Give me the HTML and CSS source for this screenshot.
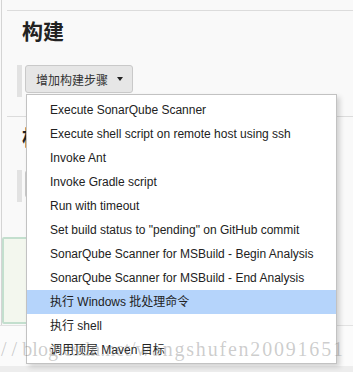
FILE: index.html
```html
<!DOCTYPE html>
<html lang="zh">
<head>
<meta charset="utf-8">
<title>构建</title>
<link rel="stylesheet" href="styles.css">
</head>
<body>
<div class="frame">
  <section class="section">
    <h2 class="title">构建</h2>
    <div class="step-row">
      <span class="bar"></span>
      <button class="add-btn">增加构建步骤<span class="caret"></span></button>
    </div>
  </section>
  <section class="section section-post">
    <h2 class="title">构建后操作</h2>
    <div class="step-row">
      <span class="bar"></span>
      <button class="add-btn">增加构建后操作步骤<span class="caret"></span></button>
    </div>
  </section>
  <div class="note-box"></div>
  <div class="footer-rule"></div>
  <div class="bottom-band"></div>
</div>
<ul class="menu">
  <li class="item">Execute SonarQube Scanner</li>
  <li class="item">Execute shell script on remote host using ssh</li>
  <li class="item">Invoke Ant</li>
  <li class="item">Invoke Gradle script</li>
  <li class="item">Run with timeout</li>
  <li class="item">Set build status to "pending" on GitHub commit</li>
  <li class="item">SonarQube Scanner for MSBuild - Begin Analysis</li>
  <li class="item">SonarQube Scanner for MSBuild - End Analysis</li>
  <li class="item item-active">执行 Windows 批处理命令</li>
  <li class="item">执行 shell</li>
  <li class="item">调用顶层 Maven 目标</li>
</ul>
<div class="watermark"><span class="wm-slash">//</span><span class="wm-host">blog.csdn.net/</span><span class="wm-user">wangshufen20091651</span></div>
</body>
</html>
```
FILE: styles.css
```css
html, body {
  margin: 0;
  padding: 0;
}
body {
  background: #f9f9f9;
  font-family: "Liberation Sans", "Noto Sans CJK SC", sans-serif;
  color: #222;
  padding-left: 1px;
  overflow: hidden;
  height: 372px;
}
.frame {
  border-left: 1px solid #d4d4d4;
  padding-top: 10px;
  min-height: 372px;
  box-sizing: border-box;
}
.section {
  margin-left: 5px;
  border-top: 1px solid #dcdcdc;
  padding-bottom: 19px;
}
.section-post {
  padding-bottom: 0;
}
.title {
  margin: 4px 0 0;
  padding-left: 15px;
  font-family: "Noto Sans CJK SC", sans-serif;
  font-size: 21px;
  line-height: 30px;
  font-weight: 700;
  color: #222;
}
.step-row {
  display: flex;
  align-items: flex-start;
  gap: 3px;
  margin-top: 20px;
  padding-left: 10px;
}
.section-post .step-row {
  margin-top: 19px;
}
.bar {
  width: 5px;
  height: 32px;
  background: #e2e2e2;
}
.add-btn {
  display: flex;
  align-items: center;
  height: 28px;
  box-sizing: border-box;
  padding: 0 9px 0 10px;
  border: 1px solid #c9c9c9;
  border-radius: 3px;
  background: #e6e6e6;
  font-family: "Noto Sans CJK SC", sans-serif;
  font-size: 12px;
  color: #333;
  white-space: nowrap;
}
.caret {
  width: 0;
  height: 0;
  margin-left: 9px;
  border-left: 3.5px solid transparent;
  border-right: 3.5px solid transparent;
  border-top: 4px solid #222;
}
.note-box {
  margin-top: 35px;
  width: 300px;
  height: 87px;
  box-sizing: border-box;
  border: 2px solid #c3dfce;
  border-radius: 2px;
  background: #f3f7ee;
}
.footer-rule {
  margin-top: 1px;
  height: 40px;
  border-top: 1px solid #e2e2e2;
  background: #fbfbfb;
  margin-left: -2px;
}
.bottom-band {
  height: 10px;
  background: #ededed;
  margin-left: -2px;
}
.menu {
  position: absolute;
  left: 26px;
  top: 94px;
  width: 311px;
  box-sizing: border-box;
  margin: 0;
  padding: 3px 0 1px;
  list-style: none;
  background: #fff;
  border: 1px solid #c2c2c2;
  box-shadow: 3px 3px 5px rgba(0, 0, 0, 0.16);
}
.item {
  height: 24px;
  line-height: 24px;
  padding-left: 23px;
  font-size: 12px;
  color: #222;
  white-space: nowrap;
}
.item-active {
  background: #b5d4fb;
}
.watermark {
  position: absolute;
  left: 1px;
  top: 339px;
  font-family: "Liberation Serif", serif;
  font-size: 20px;
  line-height: 20px;
  color: rgba(110, 110, 110, 0.35);
  white-space: nowrap;
  pointer-events: none;
}
.wm-slash {
  letter-spacing: 5px;
}
.wm-host {
  letter-spacing: 0.1px;
}
.wm-user {
  letter-spacing: 1.8px;
}
```
